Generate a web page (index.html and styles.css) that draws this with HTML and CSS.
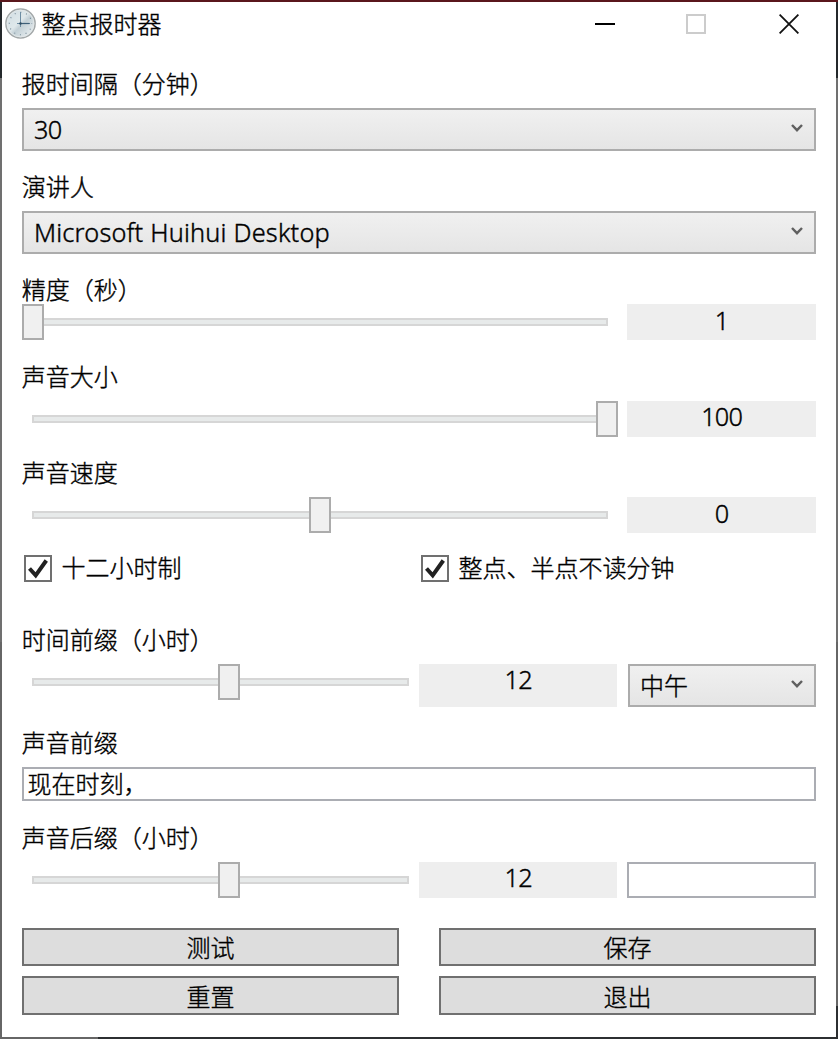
FILE: index.html
```html
<!DOCTYPE html>
<html lang="zh-CN">
<head>
<meta charset="utf-8">
<title>整点报时器</title>
<link rel="stylesheet" href="styles.css">
</head>
<body>
<div class="desktop">
<main class="window">
  <header class="titlebar">
    <svg class="clock" viewBox="0 0 32 32" width="32" height="32">
      <defs>
        <linearGradient id="face" x1="0" y1="0" x2="1" y2="1">
          <stop offset="0" stop-color="#cfdbe2"/><stop offset=".45" stop-color="#dfe8eb"/>
          <stop offset=".55" stop-color="#c3d0d6"/><stop offset="1" stop-color="#f4f8f9"/>
        </linearGradient>
      </defs>
      <circle cx="17.5" cy="18.5" r="14.6" transform="translate(-2 -2)" fill="url(#face)" stroke="#a3a8a9" stroke-width="1.5"/>
      <circle cx="15.5" cy="16.5" r="13.4" fill="none" stroke="#e2e7e8" stroke-width="1"/>
      <circle cx="15.5" cy="16.5" r="11.2" fill="none" stroke="#6f8492" stroke-width="1.1" stroke-dasharray="1 4.864" stroke-dashoffset=".5"/>
      <path d="M15.5 5v15M12 16.5h13" fill="none" stroke="#6d8da3" stroke-width="1"/>
      <path d="M15.5 16.5h9" stroke="#3d5f78" stroke-width="1.2"/>
      <circle cx="15.5" cy="16.5" r="1.2" fill="#2e4c62"/>
    </svg>
    <h1 class="title">整点报时器</h1>
    <div class="controls">
      <svg width="20" height="20" viewBox="0 0 20 20"><path d="M0 10h20" stroke="#000" stroke-width="2"/></svg>
      <svg width="20" height="20" viewBox="0 0 20 20"><path d="M1 1h18v18H1z" fill="none" stroke="#ccc" stroke-width="2"/></svg>
      <svg class="close" width="20" height="20" viewBox="0 0 20 20"><path d="M.6.6l18.8 18.8M19.4.6L.6 19.4" stroke="#111" stroke-width="1.8"/></svg>
    </div>
  </header>

  <section class="field">
    <div class="label">报时间隔（分钟）</div>
    <div class="select"><span class="digits">30</span><svg class="chevron" viewBox="0 0 12 9"><path d="M1 1l5 5.2L11 1" /></svg></div>
  </section>
  <section class="field">
    <div class="label">演讲人</div>
    <div class="select"><span class="latin">Microsoft Huihui Desktop</span><svg class="chevron" viewBox="0 0 12 9"><path d="M1 1l5 5.2L11 1" /></svg></div>
  </section>
  <section class="field precision">
    <div class="label">精度（秒）</div>
    <div class="row wide">
      <div class="slider"><div class="track"></div><div class="thumb at-min"></div></div>
      <div class="value">1</div>
    </div>
  </section>
  <section class="field volume">
    <div class="label">声音大小</div>
    <div class="row wide">
      <div class="slider"><div class="track"></div><div class="thumb at-max"></div></div>
      <div class="value raised">100</div>
    </div>
  </section>
  <section class="field">
    <div class="label">声音速度</div>
    <div class="row wide">
      <div class="slider"><div class="track"></div><div class="thumb at-mid"></div></div>
      <div class="value">0</div>
    </div>
  </section>

  <section class="checks">
    <div class="check"><svg class="box" viewBox="0 0 28 27"><path class="edge" d="M1 1h26v25H1z"/><path class="tick" d="M5.5 13.5l6.2 6.8L22.3 5.5"/></svg><span>十二小时制</span></div>
    <div class="check"><svg class="box" viewBox="0 0 28 27"><path class="edge" d="M1 1h26v25H1z"/><path class="tick" d="M5.5 13.5l6.2 6.8L22.3 5.5"/></svg><span>整点、半点不读分钟</span></div>
  </section>

  <section class="field">
    <div class="label">时间前缀（小时）</div>
    <div class="row triple tall">
      <div class="slider"><div class="track"></div><div class="thumb at-noon"></div></div>
      <div class="value raised">12</div>
      <div class="select small"><span>中午</span><svg class="chevron" viewBox="0 0 12 9"><path d="M1 1l5 5.2L11 1" /></svg></div>
    </div>
  </section>
  <section class="field">
    <div class="label">声音前缀</div>
    <div class="textbox">现在时刻，</div>
  </section>
  <section class="field suffix">
    <div class="label">声音后缀（小时）</div>
    <div class="row triple">
      <div class="slider"><div class="track"></div><div class="thumb at-noon"></div></div>
      <div class="value raised">12</div>
      <div class="textbox"></div>
    </div>
  </section>

  <section class="buttons">
    <div class="button">测试</div>
    <div class="button">保存</div>
    <div class="button lower">重置</div>
    <div class="button lower">退出</div>
  </section>
</main>
</div>
</body>
</html>
```
FILE: styles.css
```css
* { box-sizing: border-box; }
body {
  margin: 0;
  font-family: "Noto Sans", "Noto Sans CJK SC", sans-serif;
  font-size: 24px;
  font-weight: 300;
  color: #000;
  -webkit-text-stroke: .4px #000;
}
.desktop {
  width: 838px;
  height: 1039px;
  padding: 2px;
  background:
    linear-gradient(#5a171c, #5a171c) 0 0 / 838px 2px no-repeat,
    linear-gradient(#2c2f31, #2c2f31) 98px 1037px / 740px 2px no-repeat,
    linear-gradient(#2c2f31, #2c2f31) 836px 1006px / 2px 33px no-repeat,
    linear-gradient(#24282b 0 76px, #707070 76px 640px, #666 640px) 0 2px / 838px 1037px no-repeat;
}
.window {
  display: flex;
  flex-direction: column;
  height: 1035px;
  padding: 0 20px;
  background: #fff;
}
.titlebar {
  display: flex;
  height: 46px;
  margin: 0 -20px;
}
.clock { margin: 5px 0 0 3px; }
.title {
  margin: 0 0 0 4.6px;
  font: inherit;
  line-height: 44px;
  flex: 1;
}
.controls {
  display: flex;
  gap: 71px;
  padding: 12px 37px 0 0;
}
.close { margin-left: 2px; }
.field { margin-top: 20px; }
.field.volume { margin-top: 21px; }
.label {
  height: 40px;
  margin-left: -.3px;
  line-height: 32px;
  white-space: nowrap;
}
.precision .label { height: 30px; }
.select {
  display: flex;
  justify-content: space-between;
  height: 43px;
  padding: 0 11px 0 10px;
  border: 2px solid #acacac;
  background: linear-gradient(#f0f0f0, #e5e5e5);
  line-height: 39px;
}
.latin {
  font-size: 25.3px;
  letter-spacing: .2px;
}
.digits, .value {
  font-size: 25.3px;
  letter-spacing: -.75px;
}
.chevron {
  width: 12px;
  height: 9px;
  margin-top: 14px;
  fill: none;
  stroke: #606060;
  stroke-width: 2.4;
}
.row {
  display: grid;
  height: 36px;
}
.row.wide { grid-template-columns: 605.4px 188.6px; }
.row.triple { grid-template-columns: 397px 198.4px 10px 188.6px; }
.row.triple > :last-child { grid-column: 4; }
.row.tall { height: 43px; }
.select.small { margin-left: .6px; }
.slider {
  position: relative;
  height: 36px;
  padding: 14px 19.4px 0 10px;
}
.triple .slider { padding-right: 10px; }
.track {
  height: 8px;
  border: 2px solid #d6d6d6;
  background: #e7eaea;
}
.thumb {
  position: absolute;
  top: 0;
  width: 22px;
  height: 36px;
  border: 2px solid #acacac;
  background: #f0f0f0;
}
.at-min { left: 0; }
.at-mid { left: 287px; }
.at-max { left: 574px; }
.at-noon { left: 196px; }
.value {
  background: #eee;
  line-height: 32px;
  text-align: center;
}
.value.raised { line-height: 30px; }
.checks {
  display: grid;
  grid-template-columns: 397px 1fr;
  height: 32px;
  margin: 19px 0 20px;
}
.check {
  display: flex;
  gap: 9.5px;
  padding-left: 2px;
  line-height: 32px;
}
.box {
  width: 28px;
  height: 27px;
  margin-top: 3px;
}
.edge { fill: #fff; stroke: #707070; stroke-width: 2; }
.tick { fill: none; stroke: #212121; stroke-width: 4; }
.textbox {
  height: 34px;
  padding-left: 3.5px;
  border: 2px solid #abadb3;
  line-height: 30px;
}
.row .textbox { height: 36px; }
.suffix { margin-top: 21px; }
.buttons {
  display: grid;
  grid-template: 38px 39px / 377px 377px;
  gap: 10px 40px;
  margin-top: 30px;
}
.button {
  border: 2px solid #707070;
  background: #ddd;
  line-height: 35px;
  text-align: center;
}
.button.lower { line-height: 37px; }
```
